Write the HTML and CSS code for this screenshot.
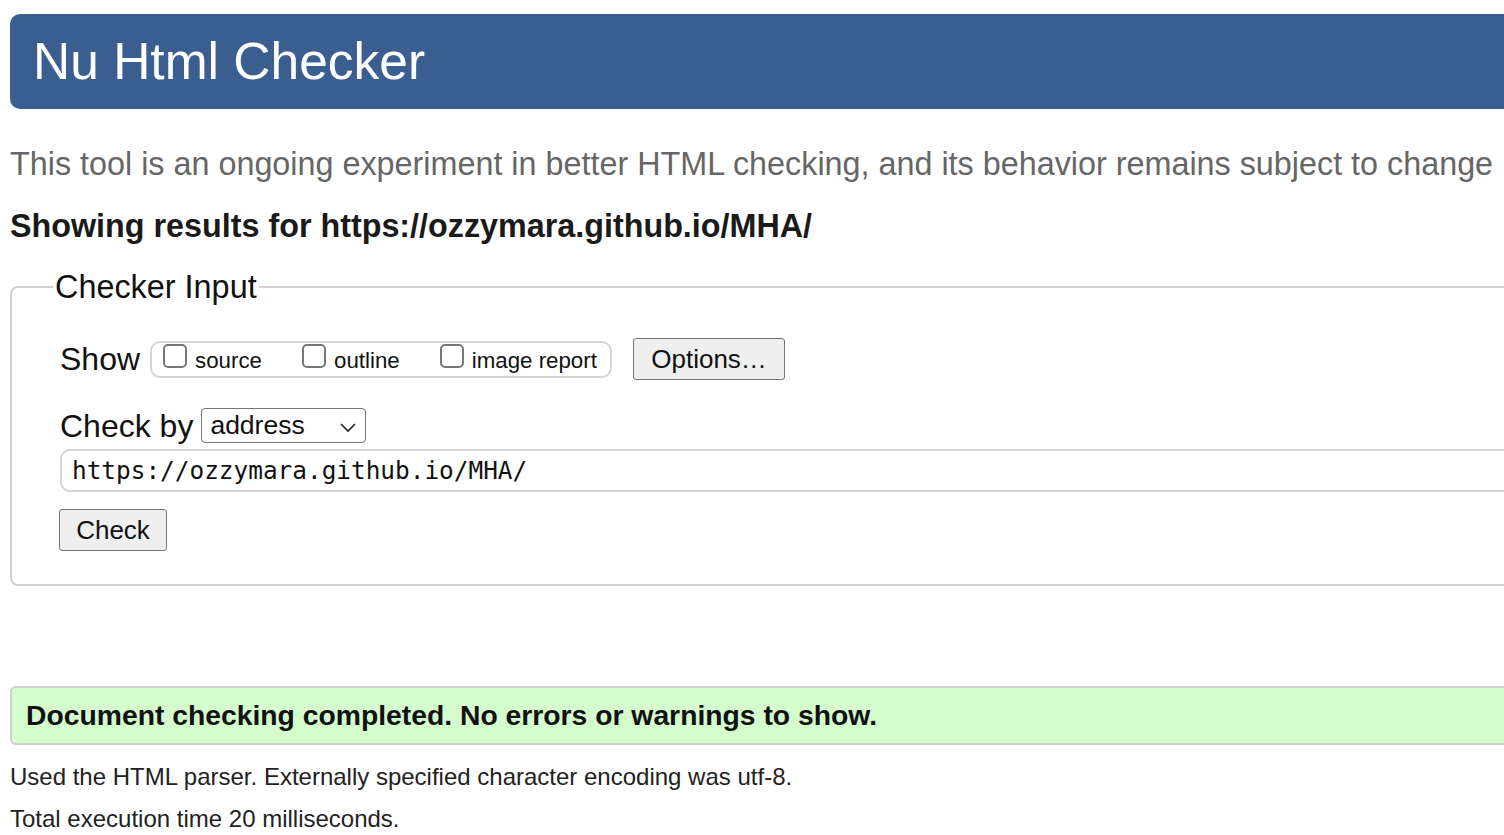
FILE: index.html
```html
<!DOCTYPE html>
<html lang="en">
<head>
<meta charset="utf-8">
<title>Nu Html Checker</title>
<link rel="stylesheet" href="styles.css">
</head>
<body>
<div class="page">
  <h1 class="banner">Nu Html Checker</h1>
  <p class="tagline">This tool is an ongoing experiment in better HTML checking, and its behavior remains subject to change</p>
  <p class="results-for">Showing results for https://ozzymara.github.io/MHA/</p>
  <fieldset class="checker">
    <legend class="checker-legend">Checker Input</legend>
    <div class="show-row">
      <span class="row-label">Show</span>
      <div class="show-group">
        <label class="opt"><input type="checkbox" class="cb"><span>source</span></label>
        <label class="opt"><input type="checkbox" class="cb"><span>outline</span></label>
        <label class="opt"><input type="checkbox" class="cb"><span>image report</span></label>
      </div>
      <button class="btn btn-options" type="button">Options…</button>
    </div>
    <div class="checkby-row">
      <span class="row-label">Check by</span>
      <div class="select">
        <span>address</span>
        <svg class="chev" width="18" height="12" viewBox="0 0 18 12"><path d="M2 3 L9 10 L16 3" fill="none" stroke="#222" stroke-width="1.6"/></svg>
      </div>
    </div>
    <div class="url-input">https://ozzymara.github.io/MHA/</div>
    <button class="btn btn-check" type="button">Check</button>
  </fieldset>
  <div class="success">Document checking completed. No errors or warnings to show.</div>
  <p class="details">Used the HTML parser. Externally specified character encoding was utf-8.</p>
  <p class="details details-2">Total execution time 20 milliseconds.</p>
</div>
</body>
</html>
```
FILE: styles.css
```css
html, body {
  margin: 0;
  padding: 0;
  overflow: hidden;
  background: #fff;
}
body {
  font-family: "Liberation Sans", Arial, sans-serif;
  color: #111;
}
.page {
  width: 1640px;
  padding: 14px 0 0 10px;
}
.banner {
  margin: 0;
  height: 95px;
  line-height: 95px;
  padding-left: 23px;
  background: #3b5e91;
  color: #fff;
  font-size: 51.5px;
  font-weight: normal;
  border-radius: 10px;
}
.tagline {
  margin: 37px 0 0 0;
  font-size: 32.35px;
  line-height: 36px;
  color: #666;
  white-space: nowrap;
}
.results-for {
  margin: 26px 0 0 0;
  font-size: 32.3px;
  line-height: 36px;
  font-weight: bold;
  color: #1a1a1a;
}
.checker {
  margin: 25px 0 0 0;
  border: 2px solid #d0d0d0;
  border-radius: 8px;
  padding: 33px 0 33px 48px;
  min-width: 0;
}
.checker-legend {
  font-size: 32.4px;
  line-height: 36px;
  padding: 0 2px;
  margin-left: -7px;
  color: #111;
}
.show-row {
  display: flex;
  align-items: center;
  height: 42px;
}
.row-label {
  font-size: 32px;
  line-height: 36px;
}
.show-group {
  display: flex;
  align-items: center;
  margin-left: 10px;
  height: 33px;
  border: 2px solid #d4d4d4;
  border-radius: 10px;
  padding: 0 11px 0 11px;
  width: 436px;
  box-sizing: content-box;
}
.opt {
  display: flex;
  align-items: center;
  font-size: 22.3px;
  margin-right: 40px;
}
.opt:last-child { margin-right: 0; }
.cb {
  appearance: none;
  -webkit-appearance: none;
  width: 24px;
  height: 24px;
  margin: -6px 8px 0 0;
  border: 2px solid #777;
  border-radius: 5px;
  background: #fff;
  box-sizing: border-box;
}
.opt span { padding-top: 4px; }
.btn {
  font-family: "Liberation Sans", Arial, sans-serif;
  font-size: 26px;
  color: #111;
  background: #efefef;
  border: 1.5px solid #767676;
  border-radius: 3px;
  padding: 0;
}
.btn-options {
  margin-left: 21px;
  width: 152px;
  height: 42px;
}
.checkby-row {
  display: flex;
  align-items: center;
  margin-top: 28px;
  height: 35px;
}
.select {
  margin-left: 8px;
  width: 165px;
  height: 35px;
  box-sizing: border-box;
  border: 1.5px solid #767676;
  border-radius: 4px;
  display: flex;
  align-items: center;
  justify-content: space-between;
  padding: 0 8px 0 8px;
  font-size: 26.5px;
}
.chev { margin-top: 2px; }
.url-input {
  margin-top: 6px;
  height: 43px;
  box-sizing: border-box;
  border: 2px solid #d4d4d4;
  border-right: none;
  border-radius: 10px 0 0 10px;
  padding-left: 10px;
  display: flex;
  align-items: center;
  font-family: "DejaVu Sans Mono", "Liberation Mono", monospace;
  font-size: 24.4px;
  color: #111;
}
.btn-check {
  margin-top: 17px;
  margin-left: -1px;
  width: 108px;
  height: 42px;
}
.success {
  margin-top: 100px;
  height: 59px;
  box-sizing: border-box;
  background: #d5fccd;
  border: 2px solid #cfcfcf;
  border-right: none;
  border-radius: 6px 0 0 6px;
  padding-left: 14px;
  display: flex;
  align-items: center;
  font-size: 28.3px;
  font-weight: bold;
  color: #111;
}
.details {
  margin: 18px 0 0 0;
  font-size: 24px;
  line-height: 28px;
  color: #222;
  white-space: nowrap;
}
.details-2 {
  margin-top: 14px;
}
```
